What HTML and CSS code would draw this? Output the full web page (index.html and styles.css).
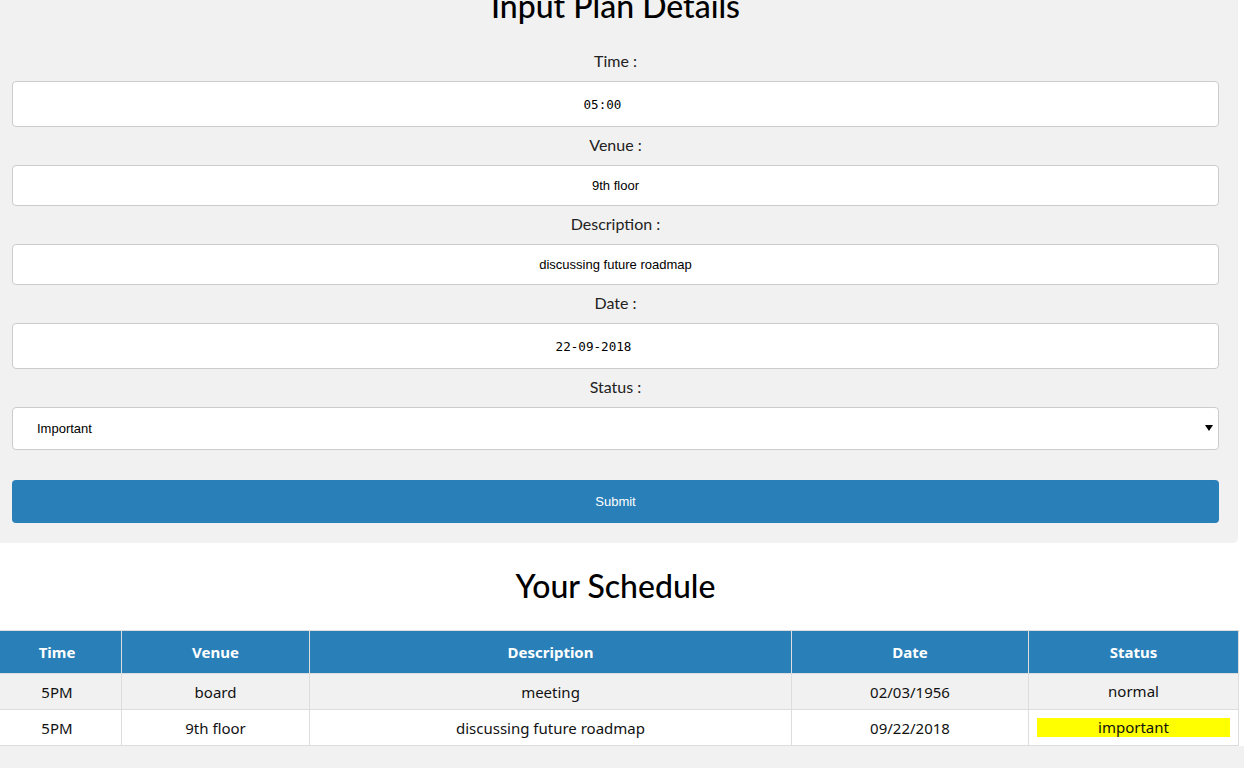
FILE: index.html
```html
<!DOCTYPE html>
<html lang="en">
<head>
<meta charset="utf-8">
<title>Plan</title>
<link rel="stylesheet" href="styles.css">
</head>
<body>
<div class="page">
  <form class="plan-form">
    <h1 class="form-title">Input Plan Details</h1>
    <label class="field-label">Time :</label>
    <input class="field field-tall mono mono-time" type="text" value="05:00">
    <label class="field-label">Venue :</label>
    <input class="field" type="text" value="9th floor">
    <label class="field-label">Description :</label>
    <input class="field" type="text" value="discussing future roadmap">
    <label class="field-label">Date :</label>
    <input class="field field-tall mono mono-date" type="text" value="22-09-2018">
    <label class="field-label">Status :</label>
    <div class="select-wrap">
      <select class="field-select">
        <option>Important</option>
        <option>Normal</option>
      </select>
      <svg class="select-arrow" width="8" height="6" viewBox="0 0 8 6"><path d="M0 0H8L4 6Z" fill="#000"/></svg>
    </div>
    <button class="submit" type="button">Submit</button>
  </form>
  <section class="schedule">
    <h1 class="schedule-title">Your Schedule</h1>
    <table class="schedule-table">
      <thead>
        <tr>
          <th class="c-time">Time</th>
          <th class="c-venue">Venue</th>
          <th class="c-desc">Description</th>
          <th class="c-date">Date</th>
          <th class="c-status">Status</th>
        </tr>
      </thead>
      <tbody>
        <tr>
          <td>5PM</td>
          <td>board</td>
          <td>meeting</td>
          <td>02/03/1956</td>
          <td><span class="status">normal</span></td>
        </tr>
        <tr>
          <td>5PM</td>
          <td>9th floor</td>
          <td>discussing future roadmap</td>
          <td>09/22/2018</td>
          <td><span class="status status-important">important</span></td>
        </tr>
      </tbody>
    </table>
  </section>
</div>
</body>
</html>
```
FILE: styles.css
```css
html, body {
  margin: 0;
  padding: 0;
}
body {
  background: #f1f1f1;
  font-family: "Lato", "Noto Sans", sans-serif;
  color: #111;
  overflow: hidden;
}
.page {
  background: #fff;
}
.plan-form {
  background: #f1f1f1;
  margin: 0 6px 0 0;
  padding: 0 19px 20px 12px;
  border-radius: 0 0 5px 0;
  display: flex;
  flex-direction: column;
}
.form-title {
  margin: -14px 0 0 0;
  font-size: 32px;
  font-weight: 500;
  line-height: 40px;
  text-align: center;
  color: #000;
  height: 65px;
}
.field-label {
  display: block;
  font-size: 16px;
  line-height: 20px;
  text-align: center;
  color: #222;
  margin: 0 0 10px 0;
}
.field {
  box-sizing: border-box;
  width: 100%;
  height: 41px;
  margin: 0 0 8px 0;
  border: 1px solid #ccc;
  border-radius: 4px;
  background: #fff;
  text-align: center;
  font-family: "Liberation Sans", Arial, sans-serif;
  font-size: 13px;
  color: #000;
  padding: 0 10px;
}
.field-tall {
  height: 46px;
}
.mono {
  font-family: "DejaVu Sans Mono", monospace;
  font-size: 12.6px;
}
.mono-time {
  padding-right: 36px;
}
.mono-date {
  padding-right: 54px;
}
.select-wrap {
  position: relative;
  margin: 0 0 30px 0;
}
.field-select {
  box-sizing: border-box;
  width: 100%;
  height: 43px;
  border: 1px solid #ccc;
  border-radius: 4px;
  background: #fff;
  -webkit-appearance: none;
  appearance: none;
  font-family: "Liberation Sans", Arial, sans-serif;
  font-size: 13px;
  color: #000;
  padding: 0 0 0 24px;
}
.select-arrow {
  position: absolute;
  right: 6px;
  top: 18px;
}
.submit {
  height: 43px;
  border: none;
  border-radius: 4px;
  background: #2980b9;
  color: #fff;
  font-family: "Liberation Sans", Arial, sans-serif;
  font-size: 13px;
}
.schedule {
  background: #fff;
  padding-top: 1px;
}
.schedule-title {
  margin: 19px 13px 0 0;
  font-size: 32px;
  font-weight: 500;
  line-height: 46px;
  text-align: center;
  color: #000;
  height: 67px;
}
.schedule-table {
  width: 1239px;
  border-collapse: collapse;
  font-family: "Noto Sans", sans-serif;
  font-size: 15px;
  color: #111;
  background: #f1f1f1;
}
.schedule-table th,
.schedule-table td {
  border: 1px solid #ddd;
  text-align: center;
  padding: 0 8px;
}
.schedule-table th:first-child,
.schedule-table td:first-child {
  border-left: 0;
  padding-right: 15px;
}
.schedule-table th {
  background: #2980b9;
  color: #fff;
  font-weight: 700;
  height: 42px;
}
.schedule-table td {
  height: 35px;
  line-height: 18px;
}
.schedule-table tbody tr:nth-child(2) td {
  background: #fff;
}
.c-time { width: 98px; }
.c-venue { width: 171px; }
.c-desc { width: 465px; }
.c-date { width: 220px; }
.c-status { width: 193px; }
.status {
  display: block;
  line-height: 19px;
}
.status-important {
  background: #ffff00;
}
```
